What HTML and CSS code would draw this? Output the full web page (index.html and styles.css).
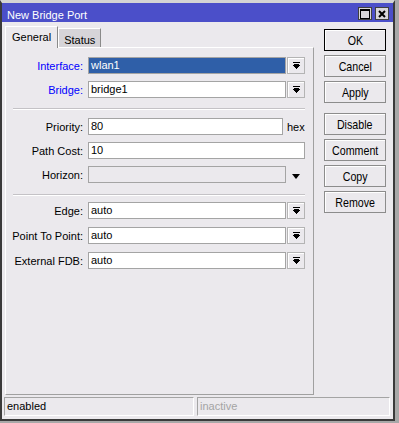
FILE: index.html
```html
<!DOCTYPE html>
<html lang="en">
<head>
    <meta charset="UTF-8">
    <title>New Bridge Port</title>
    <link rel="stylesheet" href="styles.css">
</head>
<body>

<div class="window">
    <!--Title bar-->
    <div class="titlebar">
        <span class="title">New Bridge Port</span>
        <div class="title-buttons">
            <span class="tbtn">
                <svg width="10" height="10" viewBox="0 0 10 10" shape-rendering="crispEdges">
                    <rect x="0.5" y="0.5" width="9" height="9" fill="none" stroke="#000"/>
                    <rect x="0" y="0" width="10" height="2" fill="#000"/>
                </svg>
            </span>
            <span class="tbtn">
                <svg width="8" height="8" viewBox="0 0 8 8">
                    <path d="M1 1 L7 7 M7 1 L1 7" stroke="#000" stroke-width="2" fill="none"/>
                </svg>
            </span>
        </div>
    </div>

    <div class="content">
        <div class="main">
            <div class="left">
                <!--Tabs-->
                <div class="tabs">
                    <div class="tab active">General</div>
                    <div class="tab">Status</div>
                </div>

                <div class="panel">
                    <div class="group">
                        <div class="row">
                            <label class="blue">Interface:</label>
                            <div class="field selected">wlan1</div>
                            <span class="drop">
                                <svg width="9" height="7" viewBox="0 0 9 7" shape-rendering="crispEdges">
                                    <rect x="1" y="0" width="7" height="1"/>
                                    <rect x="2" y="2" width="5" height="1"/>
                                    <rect x="1" y="3" width="7" height="1"/>
                                    <rect x="2" y="4" width="5" height="1"/>
                                    <rect x="3" y="5" width="3" height="1"/>
                                    <rect x="4" y="6" width="1" height="1"/>
                                </svg>
                            </span>
                        </div>
                        <div class="row">
                            <label class="blue">Bridge:</label>
                            <div class="field">bridge1</div>
                            <span class="drop">
                                <svg width="9" height="7" viewBox="0 0 9 7" shape-rendering="crispEdges">
                                    <rect x="1" y="0" width="7" height="1"/>
                                    <rect x="2" y="2" width="5" height="1"/>
                                    <rect x="1" y="3" width="7" height="1"/>
                                    <rect x="2" y="4" width="5" height="1"/>
                                    <rect x="3" y="5" width="3" height="1"/>
                                    <rect x="4" y="6" width="1" height="1"/>
                                </svg>
                            </span>
                        </div>
                    </div>

                    <div class="sep"></div>

                    <div class="group">
                        <div class="row">
                            <label>Priority:</label>
                            <div class="field short">80</div>
                            <span class="unit">hex</span>
                        </div>
                        <div class="row">
                            <label>Path Cost:</label>
                            <div class="field full">10</div>
                        </div>
                        <div class="row">
                            <label>Horizon:</label>
                            <div class="field disabled"></div>
                            <span class="arrow"></span>
                        </div>
                    </div>

                    <div class="sep sep2"></div>

                    <div class="group wide">
                        <div class="row">
                            <label>Edge:</label>
                            <div class="field">auto</div>
                            <span class="drop">
                                <svg width="9" height="7" viewBox="0 0 9 7" shape-rendering="crispEdges">
                                    <rect x="1" y="0" width="7" height="1"/>
                                    <rect x="2" y="2" width="5" height="1"/>
                                    <rect x="1" y="3" width="7" height="1"/>
                                    <rect x="2" y="4" width="5" height="1"/>
                                    <rect x="3" y="5" width="3" height="1"/>
                                    <rect x="4" y="6" width="1" height="1"/>
                                </svg>
                            </span>
                        </div>
                        <div class="row">
                            <label>Point To Point:</label>
                            <div class="field">auto</div>
                            <span class="drop">
                                <svg width="9" height="7" viewBox="0 0 9 7" shape-rendering="crispEdges">
                                    <rect x="1" y="0" width="7" height="1"/>
                                    <rect x="2" y="2" width="5" height="1"/>
                                    <rect x="1" y="3" width="7" height="1"/>
                                    <rect x="2" y="4" width="5" height="1"/>
                                    <rect x="3" y="5" width="3" height="1"/>
                                    <rect x="4" y="6" width="1" height="1"/>
                                </svg>
                            </span>
                        </div>
                        <div class="row">
                            <label>External FDB:</label>
                            <div class="field">auto</div>
                            <span class="drop">
                                <svg width="9" height="7" viewBox="0 0 9 7" shape-rendering="crispEdges">
                                    <rect x="1" y="0" width="7" height="1"/>
                                    <rect x="2" y="2" width="5" height="1"/>
                                    <rect x="1" y="3" width="7" height="1"/>
                                    <rect x="2" y="4" width="5" height="1"/>
                                    <rect x="3" y="5" width="3" height="1"/>
                                    <rect x="4" y="6" width="1" height="1"/>
                                </svg>
                            </span>
                        </div>
                    </div>
                </div>
            </div>

            <!--Dialog buttons-->
            <div class="buttons">
                <button class="default"><span>OK</span></button>
                <button><span>Cancel</span></button>
                <button><span>Apply</span></button>
                <button class="spaced"><span>Disable</span></button>
                <button><span>Comment</span></button>
                <button><span>Copy</span></button>
                <button><span>Remove</span></button>
            </div>
        </div>

        <!--Status bar-->
        <div class="statusbar">
            <div class="status">enabled</div>
            <div class="status dim">inactive</div>
        </div>
    </div>
</div>

</body>
</html>
```

FILE: styles.css
```css
/* Page */
body {
    margin: 0;
    background-color: #a8a8a8;
    font-family: "Liberation Sans", Arial, sans-serif;
    font-size: 11px;
    color: #000;
}

/* Window frame */
.window {
    width: 391px;
    height: 416px;
    border: 2px solid #3a3a3a;
    border-top: 3px solid #d4d4d4;
    display: flex;
    flex-direction: column;
}

/* Title bar */
.titlebar {
    height: 19px;
    box-sizing: border-box;
    background-color: #4b4fc9;
    color: #fff;
    display: flex;
    align-items: flex-start;
    padding: 5px 4px 0 5px;
}

.title {
    line-height: 14px;
}

.title-buttons {
    margin-left: auto;
    margin-top: -1px;
    display: flex;
    gap: 3px;
}

.tbtn {
    width: 12px;
    height: 11px;
    background-color: #d8d6da;
    border: 1px solid #404040;
    display: flex;
    align-items: center;
    justify-content: center;
}

/* Dialog content */
.content {
    flex: 1;
    background-color: #ebe9ed;
    padding: 4px 0 0 3px;
    display: flex;
    flex-direction: column;
}

.main {
    display: flex;
    gap: 10px;
}

.left {
    width: 309px;
    display: flex;
    flex-direction: column;
}

/* Tabs */
.tabs {
    display: flex;
    align-items: flex-end;
    height: 21px;
}

.tab {
    height: 19px;
    box-sizing: border-box;
    padding: 4px 5px 0 5px;
    line-height: 14px;
    background-color: #d6d4d8;
    border-top: 1px solid #fff;
    border-left: 1px solid #fff;
    border-right: 1px solid #8a8a8a;
}

.tab.active {
    height: 22px;
    margin-bottom: -1px;
    padding: 3px 6px 0 6px;
    background-color: #ebe9ed;
    position: relative;
    z-index: 1;
}

/* Tab panel */
.panel {
    height: 348px;
    box-sizing: border-box;
    border-top: 1px solid #fff;
    border-left: 1px solid #fff;
    border-right: 1px solid #a0a0a0;
    border-bottom: 1px solid #a0a0a0;
    padding-top: 9px;
}

.group {
    display: flex;
    flex-direction: column;
    gap: 7px;
}

.group.wide {
    gap: 8px;
}

.row {
    display: flex;
    align-items: center;
    height: 17px;
}

.row label {
    width: 77px;
    margin-right: 5px;
    text-align: right;
    white-space: nowrap;
}

.row label.blue {
    color: #0000ff;
}

.field {
    width: 198px;
    height: 17px;
    box-sizing: border-box;
    border: 1px solid #a4a4a4;
    background-color: #fff;
    padding-left: 2px;
    line-height: 15px;
}

.field.selected {
    background-color: #2f5fa8;
    color: #fff;
}

.field.short {
    width: 195px;
}

.field.full {
    width: 217px;
}

.field.disabled {
    background-color: #ebe9ed;
}

.unit {
    margin-left: 4px;
}

/* Combo box button */
.drop {
    width: 18px;
    height: 17px;
    box-sizing: border-box;
    margin-left: 1px;
    border: 1px solid #b4b4b4;
    box-shadow: inset 1px 1px #fff;
    display: flex;
    align-items: center;
    justify-content: center;
}

/* Horizon arrow */
.arrow {
    width: 18px;
    margin-left: 1px;
    display: flex;
    justify-content: center;
}

.arrow::before {
    content: "";
    margin-top: 3px;
    border-left: 4px solid transparent;
    border-right: 4px solid transparent;
    border-top: 5px solid #000;
}

/* Separators */
.sep {
    margin: 10px 8px 8px 7px;
    height: 1px;
    background-color: #c4c2c6;
    border-bottom: 1px solid #fff;
}

.sep2 {
    margin-top: 11px;
    margin-bottom: 6px;
}

/* Right side buttons */
.buttons {
    width: 62px;
    margin-top: 3px;
    display: flex;
    flex-direction: column;
    gap: 4px;
}

button {
    height: 22px;
    padding: 0;
    font-family: "Liberation Sans", Arial, sans-serif;
    font-size: 13px;
    background-color: #ebe9ed;
    border: 1px solid #8c8c8c;
    box-shadow: inset 1px 1px #fff;
    color: #000;
}

/* narrow button captions */
button span {
    display: inline-block;
    transform: scaleX(0.82);
}

button.default {
    border-color: #000;
}

button.spaced {
    margin-top: 6px;
}

/* Status bar */
.statusbar {
    margin-top: 2px;
    margin-left: -1px;
    display: flex;
    gap: 3px;
}

.status {
    height: 19px;
    box-sizing: border-box;
    width: 190px;
    border-top: 1px solid #a4a4a4;
    border-left: 1px solid #a4a4a4;
    border-bottom: 1px solid #fff;
    border-right: 1px solid #fff;
    padding-left: 2px;
    line-height: 17px;
}

.status.dim {
    width: 193px;
    color: #a4a4a4;
}
```
